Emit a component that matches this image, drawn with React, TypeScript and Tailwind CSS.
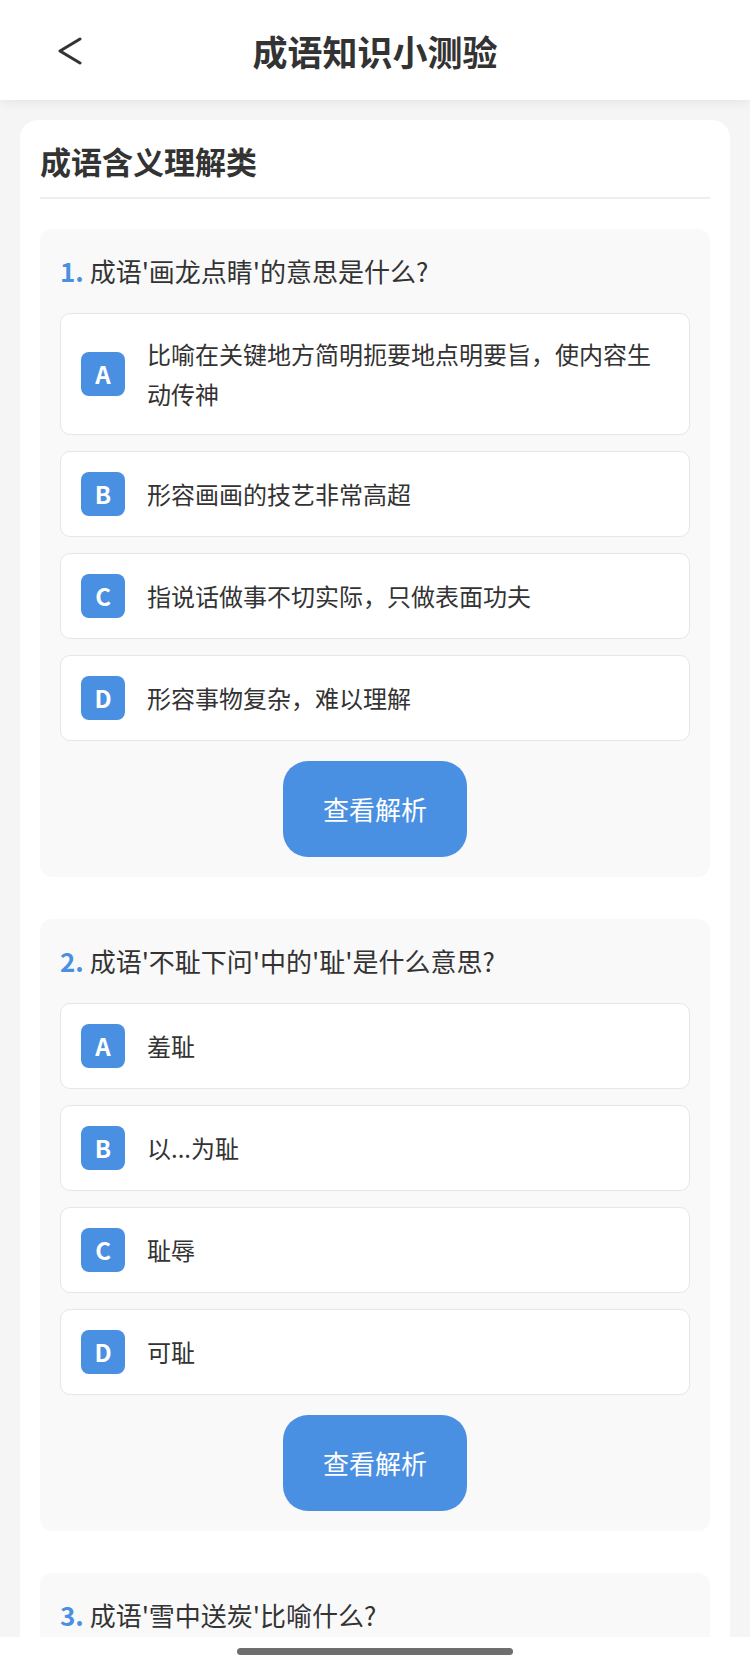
import React from "react"

const questions = [
  {
    no: 1,
    text: "成语'画龙点睛'的意思是什么?",
    options: [
      "比喻在关键地方简明扼要地点明要旨，使内容生动传神",
      "形容画画的技艺非常高超",
      "指说话做事不切实际，只做表面功夫",
      "形容事物复杂，难以理解",
    ],
  },
  {
    no: 2,
    text: "成语'不耻下问'中的'耻'是什么意思?",
    options: ["羞耻", "以...为耻", "耻辱", "可耻"],
  },
  {
    no: 3,
    text: "成语'雪中送炭'比喻什么?",
    options: [] as string[],
  },
]

const letters = ["A", "B", "C", "D"]

function Question({ q }: { q: (typeof questions)[number] }) {
  return (
    <div className="rounded-[12px] bg-[#f9f9f9] p-5">
      <div className="text-[26px] leading-[44px] text-[#333]">
        <span className="font-bold text-[#4a90e2]">{q.no}.</span> {q.text}
      </div>
      {q.options.length > 0 && (
        <>
          <div className="mt-5 flex flex-col gap-4">
            {q.options.map((opt, i) => (
              <div
                key={i}
                className="flex items-center gap-[22px] rounded-[10px] border border-[#e6e6e6] bg-white p-5"
              >
                <div className="flex h-[44px] w-[44px] shrink-0 items-center justify-center rounded-[8px] bg-[#4a90e2] text-[24px] font-bold text-white">
                  {letters[i]}
                </div>
                <div className="text-[24px] leading-[40px] text-[#333]">{opt}</div>
              </div>
            ))}
          </div>
          <div className="mt-5 flex justify-center">
            <button className="rounded-[25px] bg-[#4a90e2] px-10 py-[30px] text-[26px] leading-[36px] text-white">
              查看解析
            </button>
          </div>
        </>
      )}
    </div>
  )
}

export default function App() {
  return (
    <div className="relative h-[1666px] overflow-hidden bg-[#f5f5f5] font-['Noto_Sans_CJK_SC','Noto_Sans',sans-serif]">
      <header className="relative z-10 flex h-[100px] items-center justify-center bg-white shadow-[0_2px_10px_rgba(0,0,0,0.07)]">
        <svg
          className="absolute left-[57px] top-[37px]"
          width="26"
          height="28"
          viewBox="0 0 26 28"
          fill="none"
          stroke="#333"
          strokeWidth="3"
          strokeLinecap="round"
          strokeLinejoin="round"
        >
          <polyline points="23,2 3,14 23,26" />
        </svg>
        <h1 className="text-[35px] font-bold leading-none text-[#333]">成语知识小测验</h1>
      </header>

      <main className="px-5 pt-5">
        <div className="min-h-[1600px] rounded-[18px] bg-white px-5 pt-5">
          <h2 className="border-b-2 border-[#eeeeee] pb-[15px] text-[31px] font-bold leading-[42px] text-[#333]">
            成语含义理解类
          </h2>
          <div className="mt-[30px] flex flex-col gap-[42px]">
            {questions.map((q) => (
              <Question key={q.no} q={q} />
            ))}
          </div>
        </div>
      </main>

      <div className="absolute bottom-0 left-0 right-0 flex h-[29px] justify-center bg-white pt-[11px]">
        <div className="h-[7px] w-[276px] rounded-full bg-[#6e6e6e]" />
      </div>
    </div>
  )
}
